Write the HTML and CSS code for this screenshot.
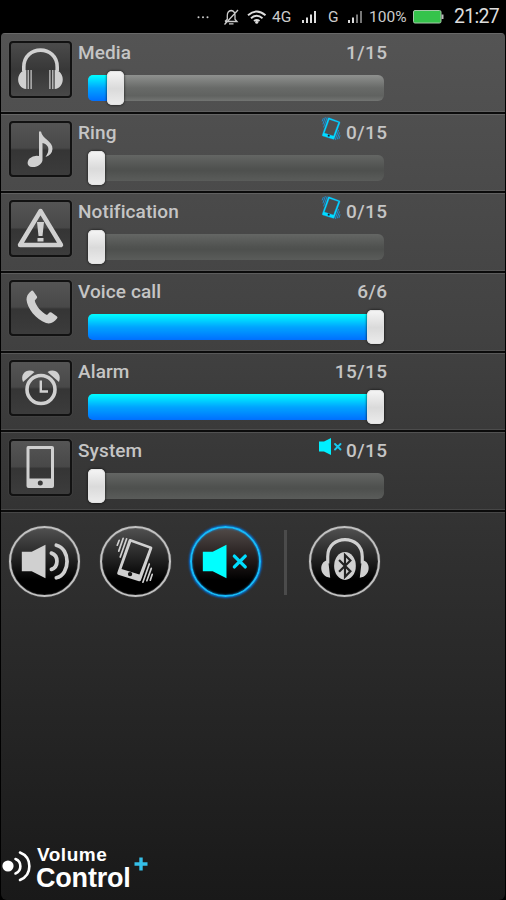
FILE: index.html
```html
<!DOCTYPE html>
<html lang="en">
<head>
<meta charset="utf-8">
<title>Volume Control+</title>
<link rel="stylesheet" href="styles.css">
</head>
<body>
<svg class="defs" width="0" height="0">
  <defs>
    <g id="phone-vibrate">
      <path fill-rule="evenodd" d="M31 13.200 52 20.800Q53.500 21.300 53 22.800L41.500 55Q41 56.500 39.500 56L18.500 49.500Q17 49 17.500 47.500L29 14.500Q29.500 12.800 31 13.200ZM31.600 16.300 21.800 43.600 40 49.300 50 22.700Z"/>
      <path class="line" d="M23.500 12.500 19 25.500M27 13 20.500 31.500M19.500 14.500 17.500 19.500M50 38.500 43.500 57M52 43 47.500 55.500M53 49 51 55"/>
      <circle class="dot" cx="30.500" cy="48.800" r="2.200"/>
    </g>
    <path id="speaker" d="M13 26H23L37 19V53L23 46H13Z"/>
  </defs>
</svg>
<div class="screen">
  <header class="status">
    <svg class="status-icons" width="95" height="32" viewBox="0 0 95 32">
      <g fill="#ccc"><circle cx="6.500" cy="16.300" r="1"/><circle cx="11" cy="16.300" r="1"/><circle cx="15.500" cy="16.300" r="1"/></g>
      <g fill="none" stroke="#ccc" stroke-width="1.300"><path d="M33 20.500H45L43 18.200V14.500Q43 10 39.200 9.500Q35.300 10 35.300 14.500V18.200L33 20.500M32.500 23.500 46 9M37 22.800H41.500"/></g>
      <g fill="none" stroke="#ddd" stroke-width="1.900"><path d="M56 14.300Q64.700 6.500 73.500 14.300M59 17.300Q64.700 12.300 70.500 17.300M62 20Q64.700 17.800 67.500 20"/></g><circle cx="64.700" cy="21.300" r="1.500" fill="#ddd"/>
    </svg>
    <span class="net">4G</span>
    <svg class="sig" width="15" height="14" viewBox="0 0 15 14" fill="#ddd"><path d="M0 10h2v3H0zM4 7.500h2V13H4zM8 4.500h2V13H8zM12 1h2v12h-2z"/></svg>
    <span class="net g">G</span>
    <svg class="sig" width="15" height="14" viewBox="0 0 15 14" fill="#ddd"><path d="M0 10h2v3H0zM4 7.500h2V13H4z"/><path fill="#777" d="M8 4.500h2V13H8zM12 1h2v12h-2z"/></svg>
    <span class="pct">100%</span>
    <svg class="batt" width="31" height="14" viewBox="0 0 31 14"><rect x=".5" y=".5" width="27.500" height="12.500" rx="1.500" fill="#35c34b" stroke="#a5c9a9"/><path d="M28.500 4.500h2v4.500h-2z" fill="#bbb"/></svg>
    <span class="clock">21:27</span>
  </header>
  <main class="panel">
    <section class="row media">
      <div class="tile"><svg viewBox="0 0 62 56"><path d="M14.800 30V26C14.800 3.500 48.200 3.500 48.200 26V30" fill="none" stroke="#d0d0d0" stroke-width="3.600"/><path d="M17.300 29C6.500 30 6.500 47 17.300 48ZM45.700 29C56.500 30 56.500 47 45.700 48ZM18.600 29h1.200v19h-1.200zM21.500 29h1.200v19h-1.200zM43.200 29h1.200v19h-1.200zM40.300 29h1.200v19h-1.200z"/></svg></div>
      <div class="body"><div class="head"><span class="name">Media</span><span class="val">1/15</span></div>
      <div class="track"><div class="fill"></div><div class="thumb"></div></div></div>
    </section>
    <section class="row">
      <div class="tile"><svg viewBox="0 0 62 56"><path d="M30 10.500H32C33 18 44 20 43.500 28Q43 34 36.500 36Q40.500 30 39 26Q37 22.500 33.500 22V38C34 43 28 46.500 23 46C18 45.500 17.500 41 20.500 37.500Q24.500 34 30 35Z"/></svg></div>
      <div class="body"><div class="head"><span class="name">Ring</span><svg class="flag vib" viewBox="13 10 42 49"><use href="#phone-vibrate"/></svg><span class="val">0/15</span></div>
      <div class="track"><div class="thumb"></div></div></div>
    </section>
    <section class="row">
      <div class="tile"><svg viewBox="0 0 62 56"><path d="M31.500 11 52 45H11Z" fill="none" stroke="#d0d0d0" stroke-width="4.400" stroke-linejoin="round"/><path d="M28 22H35L33.500 36H29.500ZM28.500 38H34.500V41.500H28.500Z"/></svg></div>
      <div class="body"><div class="head"><span class="name">Notification</span><svg class="flag vib" viewBox="13 10 42 49"><use href="#phone-vibrate"/></svg><span class="val">0/15</span></div>
      <div class="track"><div class="thumb"></div></div></div>
    </section>
    <section class="row">
      <div class="tile"><svg viewBox="0 0 62 56"><path d="M22.500 10.800Q23.500 10 24.500 11.500L28 16.500Q28.500 17.800 27.500 18.500L25.800 20.500C26.500 25.500 33 33 38 35L40.500 32.500Q41.300 31.800 42.500 32.500L48 36.500Q49 37.500 48 38.500C45 42 42 44.500 37 43C27 39.500 18 28 17.500 19.500Q17.500 14.500 22.500 10.800Z"/></svg></div>
      <div class="body"><div class="head"><span class="name">Voice call</span><span class="val">6/6</span></div>
      <div class="track"><div class="fill"></div><div class="thumb"></div></div></div>
    </section>
    <section class="row">
      <div class="tile"><svg viewBox="0 0 62 56"><circle cx="32" cy="29.500" r="14" fill="none" stroke="#d0d0d0" stroke-width="3.600"/><path d="M31.800 20.500V31.500H39" fill="none" stroke="#d0d0d0" stroke-width="2.400"/><path d="M14 22C10.500 13 19 8 25.500 12ZM50 22C53.500 13 45 8 38.500 12Z"/></svg></div>
      <div class="body"><div class="head"><span class="name">Alarm</span><span class="val">15/15</span></div>
      <div class="track"><div class="fill"></div><div class="thumb"></div></div></div>
    </section>
    <section class="row">
      <div class="tile"><svg viewBox="0 0 62 56"><path fill-rule="evenodd" d="M19 7H43Q45 7 45 9V47Q45 49 43 49H19.500Q17.500 49 17.500 47V9Q17.500 7 19 7ZM20.500 10V39.500H42V10ZM31.300 41.500A2.500 2.500 0 1 0 31.300 46.500A2.500 2.500 0 1 0 31.300 41.500Z"/></svg></div>
      <div class="body"><div class="head"><span class="name">System</span><svg class="flag mute" viewBox="13 19 46 34"><use href="#speaker"/><path class="line" d="M45 31 56 42M56 31 45 42"/></svg><span class="val">0/15</span></div>
      <div class="track"><div class="thumb"></div></div></div>
    </section>
    <nav class="modes">
      <div class="knob"><svg viewBox="0 0 72 72"><use href="#speaker"/><path d="M43 27.500C50.500 30 50.500 41.500 43 44M48 19.500C62.500 23 62.500 49 48 52.500" fill="none" stroke="#d0d0d0" stroke-width="3.800" stroke-linecap="round"/></svg></div>
      <div class="knob"><svg viewBox="0 0 72 72"><use href="#phone-vibrate"/></svg></div>
      <div class="knob active"><svg viewBox="0 0 72 72"><use href="#speaker"/><path d="M45 30.500 56 41.500M56 30.500 45 41.500" fill="none" stroke="#0df" stroke-width="3.400" stroke-linecap="round"/></svg></div>
      <div class="divider"></div>
      <div class="knob"><svg viewBox="0 0 72 72"><path d="M19 38V31C19 8 54 8 54 31V38" fill="none" stroke="#d0d0d0" stroke-width="3.200"/><path d="M18.500 35C10 36 10 51 21.500 52.500L19.500 35ZM54.500 35C63 36 63 51 51.500 52.500L53.500 35Z"/><ellipse cx="36.500" cy="40.500" rx="11" ry="14.200"/><path d="M30.500 34.500 42 46 36.500 51.500V29.500L42 35 30.500 46.500" fill="none" stroke="#222" stroke-width="2.200"/></svg></div>
    </nav>
    <footer class="brand">
      <svg width="35" height="34" viewBox="0 0 35 34"><circle cx="7" cy="17" r="5.600"/><path d="M14.500 10C21 12.500 21 22 14.500 24.500M19 3.500C31.500 8.500 31.500 26 19 31" fill="none" stroke="#fff" stroke-width="2.600" stroke-linecap="round"/></svg>
      <div class="brand-name"><span class="b1">Volume</span><span class="b2">Control</span></div>
      <svg class="plus" width="14" height="14" viewBox="0 0 14 14"><path d="M7 .5v13M.5 7h13" stroke="#35bfe8" stroke-width="3.400"/></svg>
    </footer>
  </main>
</div>
</body>
</html>
```
FILE: styles.css
```css
* { box-sizing: border-box; }
body { margin: 0; background: #000; font-family: Roboto, "Liberation Sans", sans-serif; }
.defs { display: block; height: 0; }
.screen { width: 506px; height: 900px; overflow: hidden; display: flex; flex-direction: column; }
.status { height: 33px; flex: none; display: flex; align-items: center; padding-left: 192px; color: #ccc; white-space: nowrap; }
.status-icons { margin-right: -15px; flex: none; }
.net { width: 30px; font-size: 15.5px; flex: none; }
.net.g { width: 20px; margin-left: 11px; }
.sig { flex: none; }
.pct { width: 38px; font-size: 15.5px; margin-left: 6px; }
.batt { flex: none; margin-left: 6px; }
.clock { font-size: 19.5px; margin-left: 10px; color: #ddd; letter-spacing: -.7px; }

.panel { flex: 1; margin: 0 1px; border-radius: 4px 4px 6px 6px; display: flex; flex-direction: column; background: linear-gradient(#545454 0, #424242 34%, #303030 60%, #191919 100%); overflow: hidden; }
.row { height: 79.67px; flex: none; display: flex; align-items: flex-start; padding: 7px 0 0 8px; border-bottom: 2px solid #0b0b0b; box-shadow: inset 0 1px #ffffff20, inset 0 -1px #ffffff18; }
.row.media { height: 80.67px; padding-top: 8px; }
.tile { width: 63px; height: 56.5px; border: 2px solid #121212; border-radius: 4px; background: linear-gradient(#555 0, #484848 48%, #353535 52%, #3c3c3c 100%); box-shadow: 0 0 1px #777; }
.tile svg { width: 62px; height: 56px; margin: -2px 0 0 -2px; display: block; fill: #d0d0d0; }
.row.media .tile { background: linear-gradient(#4b4b4b, #383838 50%, #484848); }
.body { width: 310px; margin-left: 6px; }
.head { height: 26px; display: flex; line-height: 24px; font-size: 19px; font-weight: 500; color: #c5c5c5; letter-spacing: .1px; }
.name { flex: 1; }
.val { letter-spacing: .45px; margin-right: .4px; }
.track { width: 296px; height: 26px; margin: 8px 0 0 10px; display: flex; align-items: center; border-radius: 6px; background: linear-gradient(#646664, #505250 50%, #4e504e 60%, #5a5c5a); }
.media .track { background: linear-gradient(#8f918f, #686a68 50%, #606260 80%, #727472); }
.fill { width: 279px; height: 26px; border-radius: 5px 0 0 5px; background: linear-gradient(#00ffff, #00a5ff 50%, #006fff); }
.media .fill { width: 19px; }
.thumb { flex: none; width: 17px; height: 34px; border-radius: 5px; background: linear-gradient(#f6f6f6, #dadada 52%, #ececec); box-shadow: 0 0 2px 1px #0006, inset 0 0 1px 1px #e2e2e2; }
.flag { flex: none; fill: #00dfff; }
.flag.vib { --vibe: #159ce8; width: 21px; height: 25px; margin: -5px 5px 0 0; }
.flag.vib use { stroke: #10a8ff; stroke-width: .7; }
.line { fill: none; stroke: var(--vibe, #d0d0d0); stroke-width: 1.7; stroke-linecap: round; }
.dot { fill: #151515; }
.flag.mute { width: 23px; height: 17px; margin: -1px 4px 0 0; fill: #00efff; }
.flag.mute .line { stroke: #16c8ee; stroke-width: 3.8; }

.modes { flex: none; display: flex; padding: 14px 0 0 8px; height: 100px; box-shadow: inset 0 1px #ffffff18; }
.knob { width: 71px; height: 71px; flex: none; margin-right: 19.5px; border: 2px solid #c2c2c2; border-radius: 50%; background: linear-gradient(#505050, #202020 48%, #000 78%); box-shadow: 0 0 1px #aaa, inset 0 0 1px #aaa; }
.knob svg { display: block; width: 71px; height: 71px; margin: -2px 0 0 -2px; fill: #d0d0d0; }
.knob.active { border-color: #16b9fa; box-shadow: 0 0 2px 1px #0070dd, inset 0 0 2px #009aff; background: linear-gradient(#514a48, #211a1a 48%, #000 78%); }
.knob.active svg { fill: #0ff; }
.divider { width: 3px; height: 65px; margin: 4px 22px 0 3px; background: #4b4b4b; }
.brand { margin-top: auto; height: 57px; display: flex; color: #fff; font-family: "Liberation Sans", sans-serif; font-weight: bold; }
.brand > svg { flex: none; fill: #fff; margin-top: 6px; }
.brand-name { display: flex; flex-direction: column; width: 97px; }
.b1 { font-size: 19px; line-height: 22px; margin: 1px 0 0 1px; letter-spacing: .5px; }
.b2 { font-size: 27px; line-height: 24px; letter-spacing: -.2px; }
.brand > .plus { margin: 14px 0 0 1px; }
```
